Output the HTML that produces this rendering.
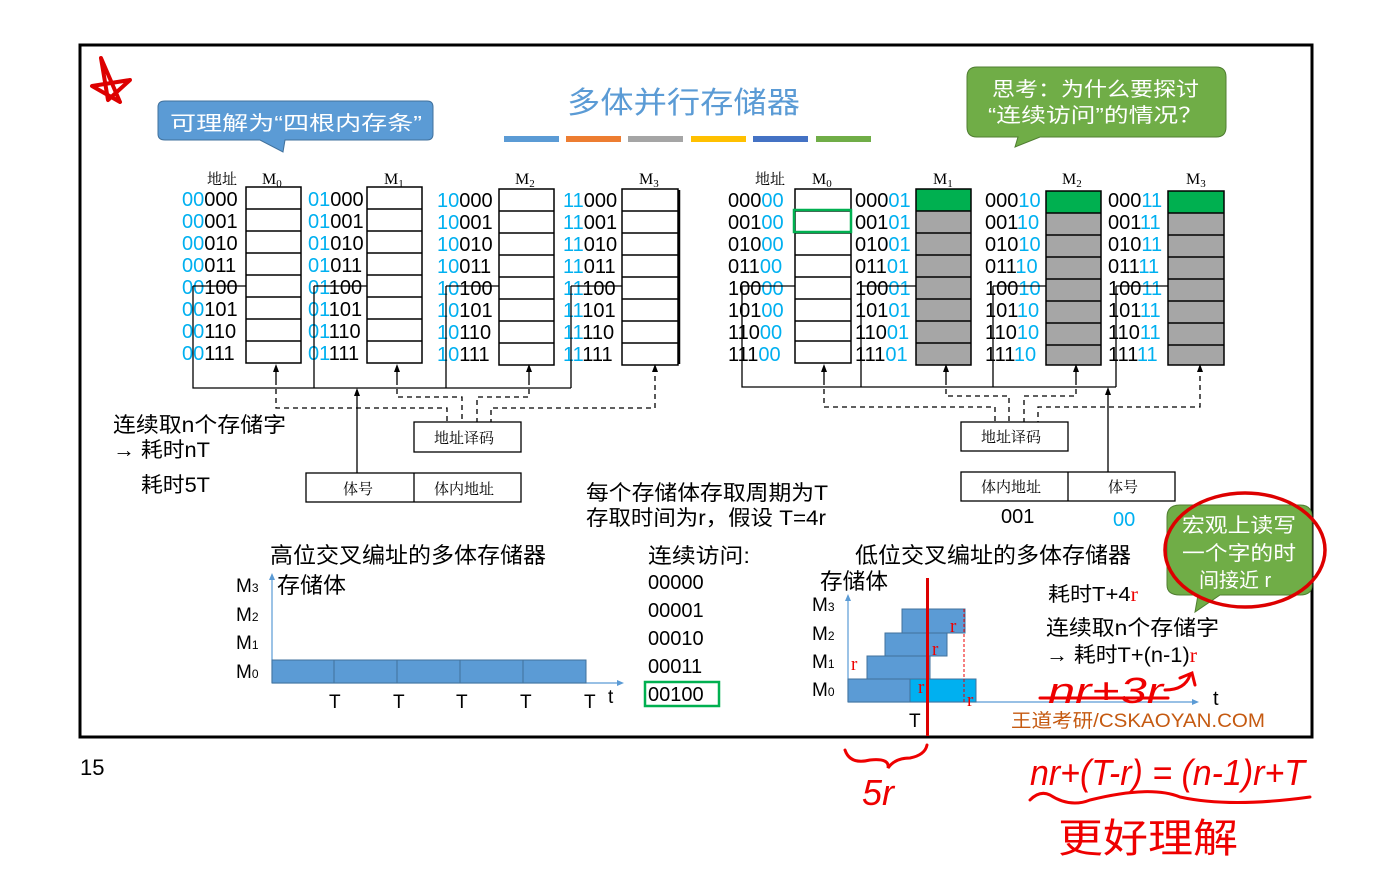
<!DOCTYPE html>
<html><head><meta charset="utf-8"><style>
html,body{margin:0;padding:0;background:#fff;}
svg{display:block;}
text{font-family:"Liberation Sans","Noto Sans CJK SC",sans-serif;}
.s{font-family:"Liberation Serif","Noto Serif CJK SC",serif;}
</style></head><body>
<svg width="1384" height="873" viewBox="0 0 1384 873" xmlns="http://www.w3.org/2000/svg">
<rect x="0" y="0" width="1384" height="873" fill="#fff"/>
<rect x="80" y="45" width="1232" height="692" fill="none" stroke="#000" stroke-width="3"/>

<!-- star -->
<path d="M101,58 L120,102 L92,86 L130,80 L108,100 Z" fill="none" stroke="#d00" stroke-width="4" stroke-linejoin="round"/>

<!-- title -->
<text x="567" y="113" font-size="30" fill="#5b9bd5" textLength="233" lengthAdjust="spacingAndGlyphs">多体并行存储器</text>
<rect x="504" y="136" width="55" height="6" fill="#5b9bd5"/>
<rect x="566" y="136" width="55" height="6" fill="#ed7d31"/>
<rect x="628" y="136" width="55" height="6" fill="#a5a5a5"/>
<rect x="691" y="136" width="55" height="6" fill="#ffc000"/>
<rect x="753" y="136" width="55" height="6" fill="#4472c4"/>
<rect x="816" y="136" width="55" height="6" fill="#70ad47"/>

<!-- blue callout -->
<path d="M165,101 H427 Q433,101 433,107 V134 Q433,140 427,140 H285 L283,152 L260,140 H165 Q158,140 158,134 V107 Q158,101 165,101 Z" fill="#5b9bd5" stroke="#41719c" stroke-width="1"/>
<text x="170" y="130" font-size="20" fill="#fff" textLength="252" lengthAdjust="spacingAndGlyphs">可理解为“四根内存条”</text>

<!-- green callout -->
<path d="M977,67 H1216 Q1226,67 1226,77 V127 Q1226,137 1216,137 H1040 L1015,147 L1018,137 H977 Q967,137 967,127 V77 Q967,67 977,67 Z" fill="#70ad47" stroke="#507e32" stroke-width="1"/>
<text x="992" y="96" font-size="20" fill="#fff" textLength="207" lengthAdjust="spacingAndGlyphs">思考：为什么要探讨</text>
<text x="988" y="122" font-size="20" fill="#fff" textLength="215" lengthAdjust="spacingAndGlyphs">“连续访问”的情况？</text>

<g font-size="16" class="s">
<text x="207" y="184" class="s" font-size="15">地址</text>
<text x="262" y="184" class="s">M<tspan font-size="11" dy="3">0</tspan></text>
<text x="384" y="184" class="s">M<tspan font-size="11" dy="3">1</tspan></text>
<text x="515" y="184" class="s">M<tspan font-size="11" dy="3">2</tspan></text>
<text x="639" y="184" class="s">M<tspan font-size="11" dy="3">3</tspan></text>
<text x="755" y="184" class="s" font-size="15">地址</text>
<text x="812" y="184" class="s">M<tspan font-size="11" dy="3">0</tspan></text>
<text x="933" y="184" class="s">M<tspan font-size="11" dy="3">1</tspan></text>
<text x="1062" y="184" class="s">M<tspan font-size="11" dy="3">2</tspan></text>
<text x="1186" y="184" class="s">M<tspan font-size="11" dy="3">3</tspan></text>
</g>

<!-- left memory boxes -->
<g fill="none" stroke="#000" stroke-width="1.5">
<rect x="246" y="187" width="55" height="176"/>
<rect x="367" y="187" width="55" height="176"/>
<rect x="499" y="189" width="55" height="176"/>
<rect x="622" y="189" width="56" height="176"/>
<path d="M246,209H301M246,231H301M246,253H301M246,275H301M246,297H301M246,319H301M246,341H301"/>
<path d="M367,209H422M367,231H422M367,253H422M367,275H422M367,297H422M367,319H422M367,341H422"/>
<path d="M499,211H554M499,233H554M499,255H554M499,277H554M499,299H554M499,321H554M499,343H554"/>
<path d="M622,211H678M622,233H678M622,255H678M622,277H678M622,299H678M622,321H678M622,343H678"/>
</g>
<path d="M679,190V364" stroke="#000" stroke-width="2.5"/>

<!-- left labels -->
<g font-size="20" fill="#000">
<text x="182" y="206"><tspan fill="#00b0f0">00</tspan>000</text>
<text x="182" y="228"><tspan fill="#00b0f0">00</tspan>001</text>
<text x="182" y="250"><tspan fill="#00b0f0">00</tspan>010</text>
<text x="182" y="272"><tspan fill="#00b0f0">00</tspan>011</text>
<text x="182" y="294"><tspan fill="#00b0f0">00</tspan>100</text>
<text x="182" y="316"><tspan fill="#00b0f0">00</tspan>101</text>
<text x="182" y="338"><tspan fill="#00b0f0">00</tspan>110</text>
<text x="182" y="360"><tspan fill="#00b0f0">00</tspan>111</text>
<text x="308" y="206"><tspan fill="#00b0f0">01</tspan>000</text>
<text x="308" y="228"><tspan fill="#00b0f0">01</tspan>001</text>
<text x="308" y="250"><tspan fill="#00b0f0">01</tspan>010</text>
<text x="308" y="272"><tspan fill="#00b0f0">01</tspan>011</text>
<text x="308" y="294"><tspan fill="#00b0f0">01</tspan>100</text>
<text x="308" y="316"><tspan fill="#00b0f0">01</tspan>101</text>
<text x="308" y="338"><tspan fill="#00b0f0">01</tspan>110</text>
<text x="308" y="360"><tspan fill="#00b0f0">01</tspan>111</text>
<text x="437" y="207"><tspan fill="#00b0f0">10</tspan>000</text>
<text x="437" y="229"><tspan fill="#00b0f0">10</tspan>001</text>
<text x="437" y="251"><tspan fill="#00b0f0">10</tspan>010</text>
<text x="437" y="273"><tspan fill="#00b0f0">10</tspan>011</text>
<text x="437" y="295"><tspan fill="#00b0f0">10</tspan>100</text>
<text x="437" y="317"><tspan fill="#00b0f0">10</tspan>101</text>
<text x="437" y="339"><tspan fill="#00b0f0">10</tspan>110</text>
<text x="437" y="361"><tspan fill="#00b0f0">10</tspan>111</text>
<text x="563" y="207"><tspan fill="#00b0f0">11</tspan>000</text>
<text x="563" y="229"><tspan fill="#00b0f0">11</tspan>001</text>
<text x="563" y="251"><tspan fill="#00b0f0">11</tspan>010</text>
<text x="563" y="273"><tspan fill="#00b0f0">11</tspan>011</text>
<text x="563" y="295"><tspan fill="#00b0f0">11</tspan>100</text>
<text x="563" y="317"><tspan fill="#00b0f0">11</tspan>101</text>
<text x="563" y="339"><tspan fill="#00b0f0">11</tspan>110</text>
<text x="563" y="361"><tspan fill="#00b0f0">11</tspan>111</text>
</g>

<!-- left bus -->
<g fill="none" stroke="#000" stroke-width="1.3">
<path d="M193,286V388H571M314,286V388M446,286V388M571,286V388M193,286H246M314,286H367M446,286H499M571,286H622"/>
<path d="M276,380V367M397,380V367M529,380V367M357,473V390"/>
<path d="M276,380V408H447V422M397,380V397H462V422M529,380V397H477V422M655,367V408H491V422" stroke-dasharray="5,4"/>
<rect x="414" y="422" width="107" height="30"/>
<rect x="306" y="473" width="215" height="29"/>
<path d="M414,473V502"/>
</g>
<g fill="#000"><path d="M276,364l-3,8h6z M397,364l-3,8h6z M529,364l-3,8h6z M655,364l-3,8h6z M357,388l-3,8h6z"/></g>
<text x="434" y="443" font-size="15" class="s">地址译码</text>
<text x="343" y="494" font-size="15" class="s">体号</text>
<text x="434" y="494" font-size="15" class="s">体内地址</text>

<!-- right memory boxes -->
<rect x="916" y="189" width="55" height="176" fill="#a6a6a6"/>
<rect x="1046" y="191" width="55" height="174" fill="#a6a6a6"/>
<rect x="1168" y="191" width="56" height="174" fill="#a6a6a6"/>
<rect x="916" y="189" width="55" height="22" fill="#00b050"/>
<rect x="1046" y="191" width="55" height="22" fill="#00b050"/>
<rect x="1168" y="191" width="56" height="22" fill="#00b050"/>
<g fill="none" stroke="#000" stroke-width="1.5">
<rect x="795" y="189" width="56" height="174"/>
<rect x="916" y="189" width="55" height="176"/>
<rect x="1046" y="191" width="55" height="174"/>
<rect x="1168" y="191" width="56" height="174"/>
<path d="M795,211H851M795,233H851M795,255H851M795,277H851M795,299H851M795,321H851M795,341H851"/>
<path d="M916,211H971M916,233H971M916,255H971M916,277H971M916,299H971M916,321H971M916,343H971"/>
<path d="M1046,213H1101M1046,235H1101M1046,257H1101M1046,279H1101M1046,301H1101M1046,323H1101M1046,345H1101"/>
<path d="M1168,213H1224M1168,235H1224M1168,257H1224M1168,279H1224M1168,301H1224M1168,323H1224M1168,345H1224"/>
</g>
<rect x="794" y="210" width="57" height="22" fill="none" stroke="#00b050" stroke-width="2.5"/>

<g font-size="20" fill="#000">
<text x="728" y="207">000<tspan fill="#00b0f0">00</tspan></text>
<text x="728" y="229">001<tspan fill="#00b0f0">00</tspan></text>
<text x="728" y="251">010<tspan fill="#00b0f0">00</tspan></text>
<text x="728" y="273">011<tspan fill="#00b0f0">00</tspan></text>
<text x="728" y="295">100<tspan fill="#00b0f0">00</tspan></text>
<text x="728" y="317">101<tspan fill="#00b0f0">00</tspan></text>
<text x="728" y="339">110<tspan fill="#00b0f0">00</tspan></text>
<text x="728" y="361">111<tspan fill="#00b0f0">00</tspan></text>
<text x="855" y="207">000<tspan fill="#00b0f0">01</tspan></text>
<text x="855" y="229">001<tspan fill="#00b0f0">01</tspan></text>
<text x="855" y="251">010<tspan fill="#00b0f0">01</tspan></text>
<text x="855" y="273">011<tspan fill="#00b0f0">01</tspan></text>
<text x="855" y="295">100<tspan fill="#00b0f0">01</tspan></text>
<text x="855" y="317">101<tspan fill="#00b0f0">01</tspan></text>
<text x="855" y="339">110<tspan fill="#00b0f0">01</tspan></text>
<text x="855" y="361">111<tspan fill="#00b0f0">01</tspan></text>
<text x="985" y="207">000<tspan fill="#00b0f0">10</tspan></text>
<text x="985" y="229">001<tspan fill="#00b0f0">10</tspan></text>
<text x="985" y="251">010<tspan fill="#00b0f0">10</tspan></text>
<text x="985" y="273">011<tspan fill="#00b0f0">10</tspan></text>
<text x="985" y="295">100<tspan fill="#00b0f0">10</tspan></text>
<text x="985" y="317">101<tspan fill="#00b0f0">10</tspan></text>
<text x="985" y="339">110<tspan fill="#00b0f0">10</tspan></text>
<text x="985" y="361">111<tspan fill="#00b0f0">10</tspan></text>
<text x="1108" y="207">000<tspan fill="#00b0f0">11</tspan></text>
<text x="1108" y="229">001<tspan fill="#00b0f0">11</tspan></text>
<text x="1108" y="251">010<tspan fill="#00b0f0">11</tspan></text>
<text x="1108" y="273">011<tspan fill="#00b0f0">11</tspan></text>
<text x="1108" y="295">100<tspan fill="#00b0f0">11</tspan></text>
<text x="1108" y="317">101<tspan fill="#00b0f0">11</tspan></text>
<text x="1108" y="339">110<tspan fill="#00b0f0">11</tspan></text>
<text x="1108" y="361">111<tspan fill="#00b0f0">11</tspan></text>
</g>

<!-- right bus -->
<g fill="none" stroke="#000" stroke-width="1.3">
<path d="M742,286V387H1116M861,286V387M993,286V387M1116,286V387M742,286H795M861,286H916M993,286H1046M1116,286H1168"/>
<path d="M824,380V367M946,380V367M1076,380V367M1108,472V390"/>
<path d="M824,380V407H995V422M946,380V396H1009V422M1076,380V396H1024V422M1200,367V407H1038V422" stroke-dasharray="5,4"/>
<rect x="961" y="422" width="107" height="29"/>
<rect x="961" y="472" width="214" height="29"/>
<path d="M1068,472V501"/>
</g>
<g fill="#000"><path d="M824,364l-3,8h6z M946,364l-3,8h6z M1076,364l-3,8h6z M1200,364l-3,8h6z M1108,387l-3,8h6z"/></g>
<text x="981" y="442" font-size="15" class="s">地址译码</text>
<text x="981" y="492" font-size="15" class="s">体内地址</text>
<text x="1108" y="492" font-size="15" class="s">体号</text>
<text x="1001" y="523" font-size="20">001</text>
<text x="1113" y="526" font-size="20" fill="#00b0f0">00</text>

<!-- left texts -->
<text x="113" y="432" font-size="21" textLength="173" lengthAdjust="spacingAndGlyphs">连续取n个存储字</text>
<text x="113" y="457" font-size="21" textLength="97" lengthAdjust="spacingAndGlyphs"><tspan font-weight="bold">→</tspan> 耗时nT</text>
<text x="141" y="492" font-size="21" textLength="69" lengthAdjust="spacingAndGlyphs">耗时5T</text>
<text x="586" y="500" font-size="21" textLength="242" lengthAdjust="spacingAndGlyphs">每个存储体存取周期为T</text>
<text x="586" y="525" font-size="21" textLength="240" lengthAdjust="spacingAndGlyphs">存取时间为r，假设 T=4r</text>

<!-- high-interleave chart -->
<text x="270" y="563" font-size="22" textLength="276" lengthAdjust="spacingAndGlyphs">高位交叉编址的多体存储器</text>
<text x="277" y="593" font-size="22" textLength="69" lengthAdjust="spacingAndGlyphs">存储体</text>
<g font-size="19">
<text x="236" y="592">M<tspan font-size="12">3</tspan></text>
<text x="236" y="621">M<tspan font-size="12">2</tspan></text>
<text x="236" y="649">M<tspan font-size="12">1</tspan></text>
<text x="236" y="678">M<tspan font-size="12">0</tspan></text>
</g>
<g stroke="#5b9bd5" stroke-width="1.2" fill="none"><path d="M272,683V577M272,683H620"/></g>
<path d="M272,573l-3,7h6z M624,683l-7,-3v6z" fill="#5b9bd5"/>
<g fill="#5b9bd5" stroke="#41719c" stroke-width="1">
<rect x="272" y="660" width="62" height="23"/><rect x="334" y="660" width="63" height="23"/><rect x="397" y="660" width="63" height="23"/><rect x="460" y="660" width="63" height="23"/><rect x="523" y="660" width="63" height="23"/>
</g>
<g font-size="19"><text x="329" y="708">T</text><text x="393" y="708">T</text><text x="456" y="708">T</text><text x="520" y="708">T</text><text x="584" y="708">T</text><text x="608" y="703">t</text></g>
<text x="648" y="563" font-size="21" textLength="102" lengthAdjust="spacingAndGlyphs">连续访问:</text>
<g font-size="20"><text x="648" y="589">00000</text><text x="648" y="617">00001</text><text x="648" y="645">00010</text><text x="648" y="673">00011</text><text x="648" y="701">00100</text></g>
<rect x="645" y="682" width="74" height="24" fill="none" stroke="#00b050" stroke-width="2.5"/>

<!-- low-interleave chart -->
<text x="855" y="563" font-size="22" textLength="276" lengthAdjust="spacingAndGlyphs">低位交叉编址的多体存储器</text>
<text x="820" y="589" font-size="22" textLength="68" lengthAdjust="spacingAndGlyphs">存储体</text>
<g font-size="19">
<text x="812" y="611">M<tspan font-size="12">3</tspan></text>
<text x="812" y="640">M<tspan font-size="12">2</tspan></text>
<text x="812" y="668">M<tspan font-size="12">1</tspan></text>
<text x="812" y="696">M<tspan font-size="12">0</tspan></text>
</g>
<g stroke="#5b9bd5" stroke-width="1.2" fill="none"><path d="M848,702V598M848,702H1195"/></g>
<path d="M848,594l-3,7h6z M1199,702l-7,-3v6z" fill="#5b9bd5"/>
<g fill="#5b9bd5" stroke="#41719c" stroke-width="1">
<rect x="848" y="679" width="62" height="23"/>
<rect x="867" y="656" width="63" height="23"/>
<rect x="885" y="633" width="62" height="23"/>
<rect x="902" y="609" width="63" height="24"/>
</g>
<rect x="910" y="679" width="66" height="23" fill="#00b0f0" stroke="#41719c" stroke-width="1"/>
<path d="M964,609V702" stroke="#e00" stroke-width="1" stroke-dasharray="3,2"/>
<g class="s" font-size="19" fill="#e00">
<text x="851" y="670" class="s">r</text><text x="918" y="693" class="s">r</text><text x="932" y="655" class="s">r</text><text x="950" y="632" class="s">r</text><text x="967" y="706" class="s">r</text>
</g>
<rect x="926" y="578" width="3" height="158" fill="#d00"/>
<text x="909" y="727" font-size="19">T</text>
<text x="1048" y="601" font-size="20" textLength="90" lengthAdjust="spacingAndGlyphs">耗时T+4<tspan fill="#e00" class="s">r</tspan></text>
<text x="1046" y="635" font-size="21" textLength="173" lengthAdjust="spacingAndGlyphs">连续取n个存储字</text>
<text x="1046" y="662" font-size="21" textLength="151" lengthAdjust="spacingAndGlyphs"><tspan font-weight="bold">→</tspan> 耗时T+(n-1)<tspan fill="#e00" class="s">r</tspan></text>
<text x="1213" y="705" font-size="20">t</text>
<text x="1011" y="727" font-size="19" fill="#c55a11" textLength="254" lengthAdjust="spacingAndGlyphs">王道考研/CSKAOYAN.COM</text>

<!-- bottom right callout -->
<path d="M1180,505 H1300 Q1312,505 1312,517 V585 Q1312,595 1300,595 H1220 L1195,612 L1198,595 H1180 Q1167,595 1167,585 V517 Q1167,505 1180,505 Z" fill="#70ad47" stroke="#507e32"/>
<text x="1182" y="532" font-size="20" fill="#fff" textLength="114" lengthAdjust="spacingAndGlyphs">宏观上读写</text>
<text x="1182" y="560" font-size="20" fill="#fff" textLength="114" lengthAdjust="spacingAndGlyphs">一个字的时</text>
<text x="1199" y="587" font-size="20" fill="#fff">间接近 r</text>
<ellipse cx="1245" cy="550" rx="80" ry="57" fill="none" stroke="#d00" stroke-width="3.5"/>

<!-- handwriting -->
<g fill="#e00" font-family="'Liberation Serif',serif" font-style="italic">
<text x="1048" y="703" font-size="36" textLength="115" lengthAdjust="spacingAndGlyphs">nr+3r</text>
<text x="1030" y="785" font-size="36" textLength="275" lengthAdjust="spacingAndGlyphs">nr+(T-r) = (n-1)r+T</text>
<text x="862" y="805" font-size="36">5r</text>
<text x="1058" y="852" font-size="40" font-family="'Noto Sans CJK SC',sans-serif" font-style="normal" textLength="180" lengthAdjust="spacingAndGlyphs">更好理解</text>
</g>
<g fill="none" stroke="#e00" stroke-width="3" stroke-linecap="round">
<path d="M1040,698H1168"/>
<path d="M1165,690Q1185,690 1190,675M1180,678L1192,673L1195,685"/>
<path d="M845,750Q850,765 870,760Q890,758 888,768Q895,758 910,758Q925,755 927,745"/>
<path d="M1030,800Q1040,790 1050,795Q1070,808 1090,800Q1150,785 1180,797Q1230,808 1310,797"/>
</g>

<text x="80" y="775" font-size="22">15</text>
</svg>
</body></html>
